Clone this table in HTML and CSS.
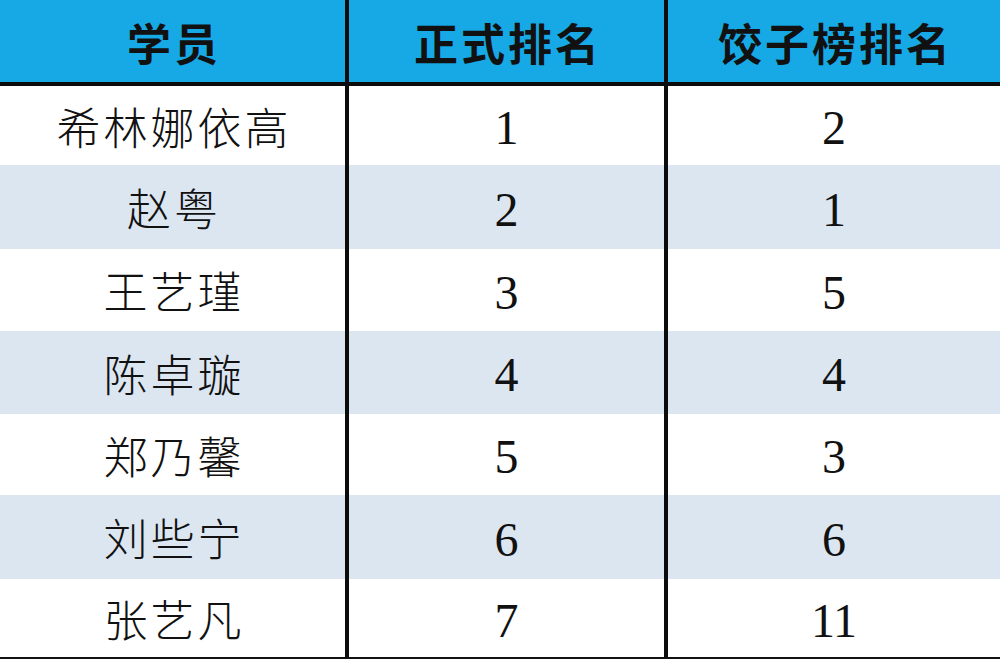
FILE: index.html
```html
<!DOCTYPE html>
<html lang="zh-CN">
<head>
<meta charset="utf-8">
<title>排名对比</title>
<link rel="stylesheet" href="styles.css">
</head>
<body>
<div class="table">
  <div class="row head">
    <div class="cell">学员</div>
    <div class="cell">正式排名</div>
    <div class="cell">饺子榜排名</div>
  </div>
  <div class="row r1">
    <div class="cell name">希林娜依高</div>
    <div class="cell num">1</div>
    <div class="cell num">2</div>
  </div>
  <div class="row r2 alt">
    <div class="cell name">赵粤</div>
    <div class="cell num">2</div>
    <div class="cell num">1</div>
  </div>
  <div class="row r3">
    <div class="cell name">王艺瑾</div>
    <div class="cell num">3</div>
    <div class="cell num">5</div>
  </div>
  <div class="row r4 alt">
    <div class="cell name">陈卓璇</div>
    <div class="cell num">4</div>
    <div class="cell num">4</div>
  </div>
  <div class="row r5">
    <div class="cell name">郑乃馨</div>
    <div class="cell num">5</div>
    <div class="cell num">3</div>
  </div>
  <div class="row r6 alt">
    <div class="cell name">刘些宁</div>
    <div class="cell num">6</div>
    <div class="cell num">6</div>
  </div>
  <div class="row r7">
    <div class="cell name">张艺凡</div>
    <div class="cell num">7</div>
    <div class="cell num">11</div>
  </div>
</div>
</body>
</html>
```
FILE: styles.css
```css
html, body {
  margin: 0;
  padding: 0;
  background: #ffffff;
}
.table {
  width: 1000px;
  height: 659px;
  display: flex;
  flex-direction: column;
  border-bottom: 2px solid #111;
  box-sizing: border-box;
  background: #fff;
}
.row {
  display: grid;
  grid-template-columns: 349px 319px 1fr;
}
.cell {
  display: flex;
  align-items: center;
  justify-content: center;
  color: #111;
}
.cell:nth-child(1),
.cell:nth-child(2) {
  border-right: 4px solid #0c0c0c;
}
.head {
  height: 86px;
  background: #16a9e6;
  border-bottom: 4px solid #0c0c0c;
  box-sizing: border-box;
}
.head .cell {
  font-family: "Noto Sans CJK SC", sans-serif;
  font-weight: 700;
  font-size: 44px;
  letter-spacing: 3px;
  padding-left: 3px;
  padding-top: 2px;
}
.alt {
  background: #dce6f1;
}
.r1 { height: 79px; }
.r2 { height: 84px; }
.r3 { height: 82px; }
.r4 { height: 83px; }
.r5 { height: 81px; }
.r6 { height: 84px; }
.r7 { height: 78px; }
.name {
  font-family: "Noto Sans CJK SC", sans-serif;
  font-weight: 300;
  font-size: 44px;
  letter-spacing: 3px;
  padding-left: 3px;
}
.num {
  font-family: "Liberation Serif", serif;
  font-size: 48px;
  padding-top: 4px;
}
```
